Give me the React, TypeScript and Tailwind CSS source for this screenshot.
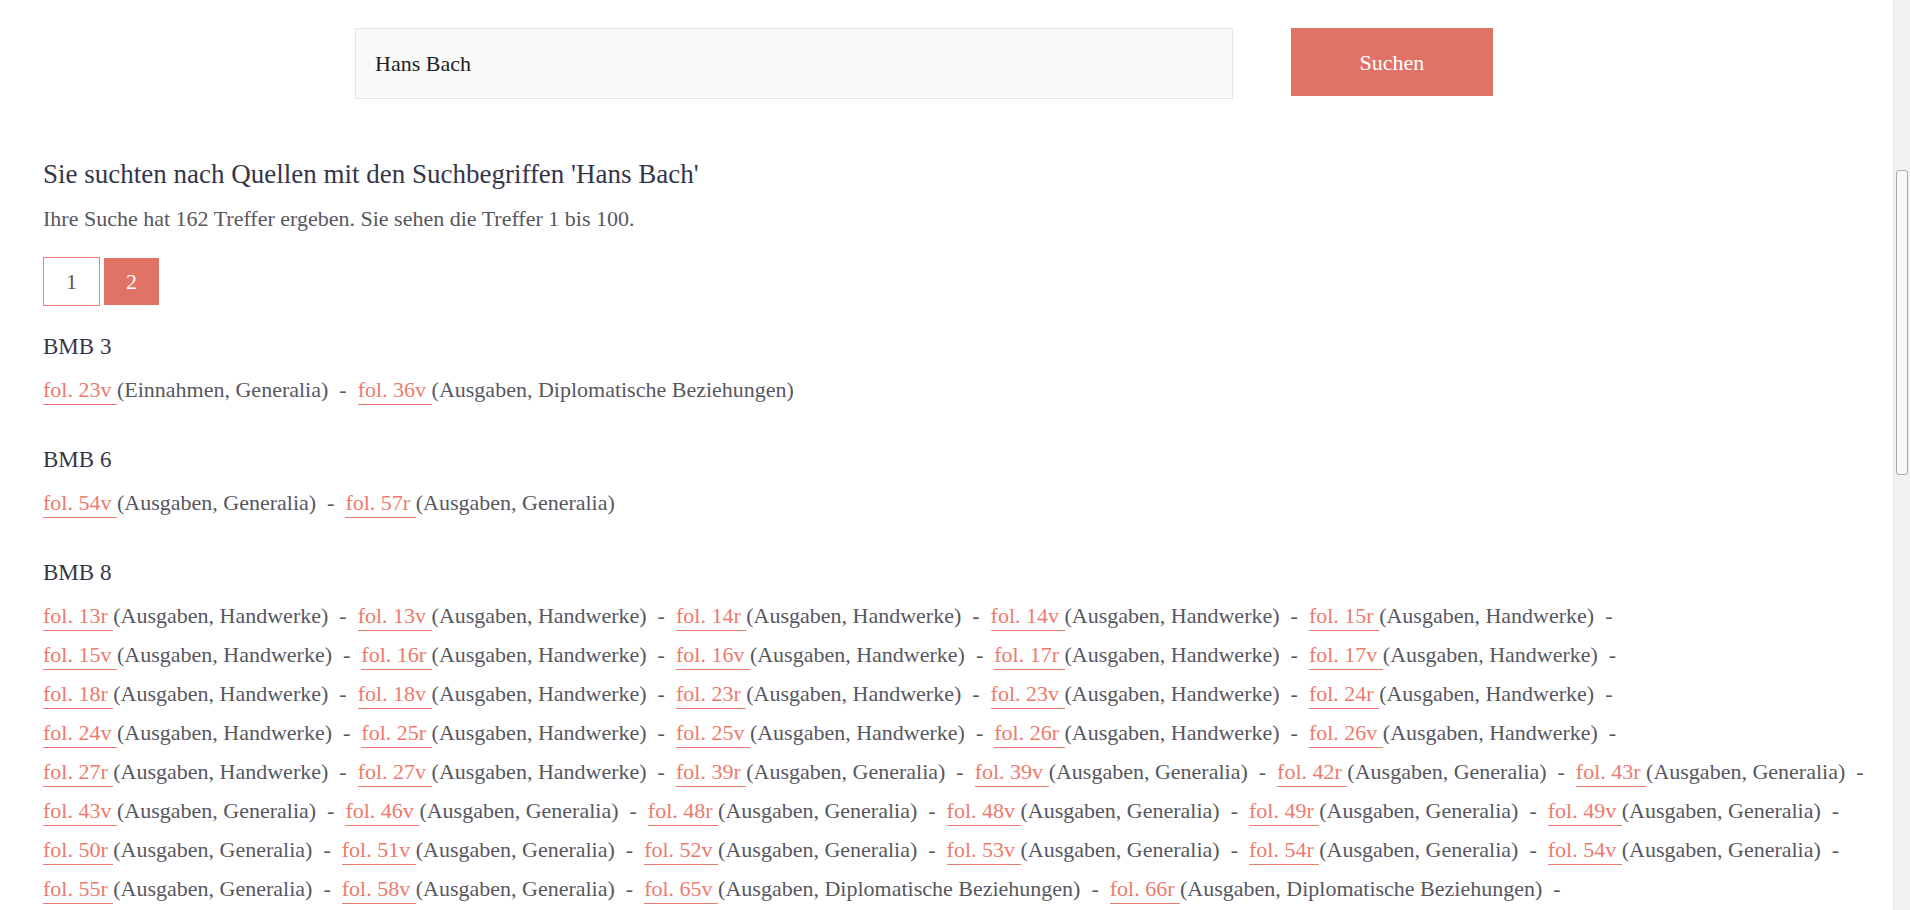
type Entry = [string, string];

const H = "Ausgaben, Handwerke";
const G = "Ausgaben, Generalia";
const D = "Ausgaben, Diplomatische Beziehungen";

interface Group {
  title: string;
  lines: Entry[][];
}

const groups: Group[] = [
  {
    title: "BMB 3",
    lines: [[["fol. 23v", "Einnahmen, Generalia"], ["fol. 36v", D]]],
  },
  {
    title: "BMB 6",
    lines: [[["fol. 54v", G], ["fol. 57r", G]]],
  },
  {
    title: "BMB 8",
    lines: [
      [["fol. 13r", H], ["fol. 13v", H], ["fol. 14r", H], ["fol. 14v", H], ["fol. 15r", H]],
      [["fol. 15v", H], ["fol. 16r", H], ["fol. 16v", H], ["fol. 17r", H], ["fol. 17v", H]],
      [["fol. 18r", H], ["fol. 18v", H], ["fol. 23r", H], ["fol. 23v", H], ["fol. 24r", H]],
      [["fol. 24v", H], ["fol. 25r", H], ["fol. 25v", H], ["fol. 26r", H], ["fol. 26v", H]],
      [["fol. 27r", H], ["fol. 27v", H], ["fol. 39r", G], ["fol. 39v", G], ["fol. 42r", G], ["fol. 43r", G]],
      [["fol. 43v", G], ["fol. 46v", G], ["fol. 48r", G], ["fol. 48v", G], ["fol. 49r", G], ["fol. 49v", G]],
      [["fol. 50r", G], ["fol. 51v", G], ["fol. 52v", G], ["fol. 53v", G], ["fol. 54r", G], ["fol. 54v", G]],
      [["fol. 55r", G], ["fol. 58v", G], ["fol. 65v", D], ["fol. 66r", D]],
      [["fol. 67r", D], ["fol. 68v", G], ["fol. 70r", G], ["fol. 71v", G]],
    ],
  },
  {
    title: "BMB 9",
    lines: [[["fol. 12r", G], ["fol. 14v", G], ["fol. 20r", H]]],
  },
  {
    title: "BMB 10",
    lines: [
      [["fol. 8v", H], ["fol. 11r", G], ["fol. 19v", G], ["fol. 22r", H], ["fol. 31v", G]],
      [["fol. 33r", G], ["fol. 40v", D]],
    ],
  },
];

function Line({ items, last }: { items: Entry[]; last: boolean }) {
  return (
    <div className="leading-[39px] whitespace-nowrap">
      {items.map(([fol, desc], i) => (
        <span key={i}>
          <a href="#" className="text-[#ec7b6d] border-b border-[#ec7b6d] pb-[2px]">
            {fol}&nbsp;
          </a>
          <span>({desc})</span>
          {(!last || i < items.length - 1) && <span>&nbsp;&nbsp;-&nbsp;&nbsp;</span>}
        </span>
      ))}
    </div>
  );
}

// browser scrollbar stand-in (the screenshot shows one on the right edge)
function FakeScrollbar() {
  return (
    <div aria-hidden className="fixed top-0 right-0 h-screen w-[17px] bg-[#f1f1f1] border-l border-[#e4e4e4]">
      <div className="absolute left-[2px] right-[2px] top-[170px] h-[305px] rounded-[3px] border border-[#a9a9a9] bg-[#f7f7f7]" />
    </div>
  );
}

export default function App() {
  return (
    <div
      className="min-h-screen bg-white text-[22px] text-[#57575f] pr-[17px]"
      style={{ fontFamily: '"Liberation Serif", serif' }}
    >
      <div className="flex items-start pt-[28px] pl-[355px]">
        <input
          defaultValue="Hans Bach"
          className="w-[878px] h-[71px] border border-[#e6e6e6] bg-[#fafafa] pl-[19px] text-[22px] text-[#222] outline-none"
        />
        <button className="ml-[58px] w-[202px] h-[68px] bg-[#e07366] text-white text-[22px]">
          Suchen
        </button>
      </div>

      <div className="px-[43px] pb-24">
        <h1 className="mt-[57px] text-[27px] leading-[36px] text-[#35354a]">
          Sie suchten nach Quellen mit den Suchbegriffen 'Hans Bach'
        </h1>
        <p className="mt-[12px] leading-[30px]">
          Ihre Suche hat 162 Treffer ergeben. Sie sehen die Treffer 1 bis 100.
        </p>

        <div className="mt-[23px] flex gap-[4px]">
          <a href="#" className="w-[57px] h-[49px] flex items-center justify-center border border-[#ef7f70] text-[#57575f]">
            1
          </a>
          <a href="#" className="w-[55px] h-[47px] mt-[1px] flex items-center justify-center bg-[#e07366] text-white">
            2
          </a>
        </div>

        {groups.map((g, gi) => (
          <section key={g.title} className={gi === 0 ? "mt-[25px]" : "mt-[35px]"}>
            <h2 className="text-[23px] leading-[32px] text-[#35354a] mb-[7px]">{g.title}</h2>
            {g.lines.map((items, li) => (
              <Line key={li} items={items} last={li === g.lines.length - 1} />
            ))}
          </section>
        ))}
      </div>

      <FakeScrollbar />
    </div>
  );
}
